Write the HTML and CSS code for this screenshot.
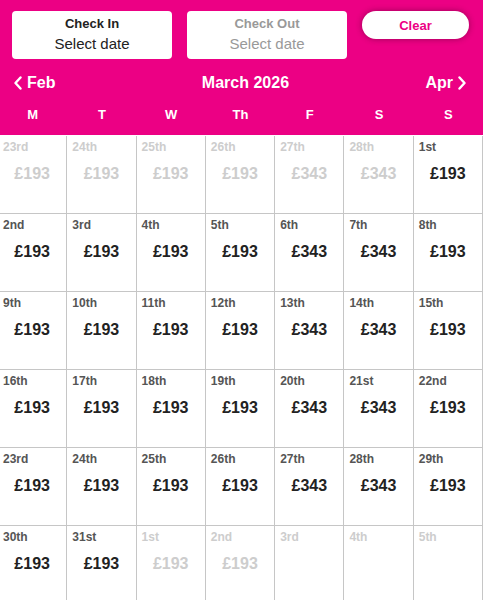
FILE: index.html
```html
<!DOCTYPE html>
<html lang="en">
<head>
<meta charset="utf-8">
<title>Select dates</title>
<link rel="stylesheet" href="styles.css">
</head>
<body>
<div class="picker">
  <header class="header">
    <div class="inputs">
      <div class="field">
        <span class="field-label">Check In</span>
        <span class="field-value">Select date</span>
      </div>
      <div class="field field-disabled">
        <span class="field-label">Check Out</span>
        <span class="field-value">Select date</span>
      </div>
      <button class="clear">Clear</button>
    </div>
    <nav class="nav">
      <span class="nav-link"><svg class="chev" width="10" height="14" viewBox="0 0 10 14"><path d="M7.5 1.5 L2.5 7 L7.5 12.5" fill="none" stroke="#fff" stroke-width="2.4" stroke-linecap="round" stroke-linejoin="round"/></svg>Feb</span>
      <span class="nav-title">March 2026</span>
      <span class="nav-link">Apr<svg class="chev" width="10" height="14" viewBox="0 0 10 14"><path d="M2.5 1.5 L7.5 7 L2.5 12.5" fill="none" stroke="#fff" stroke-width="2.4" stroke-linecap="round" stroke-linejoin="round"/></svg></span>
    </nav>
    <div class="weekdays">
      <span>M</span><span>T</span><span>W</span><span>Th</span><span>F</span><span>S</span><span>S</span>
    </div>
  </header>
  <div class="grid">
    <div class="cell off"><span class="day">23rd</span><span class="price">£193</span></div>
    <div class="cell off"><span class="day">24th</span><span class="price">£193</span></div>
    <div class="cell off"><span class="day">25th</span><span class="price">£193</span></div>
    <div class="cell off"><span class="day">26th</span><span class="price">£193</span></div>
    <div class="cell off"><span class="day">27th</span><span class="price">£343</span></div>
    <div class="cell off"><span class="day">28th</span><span class="price">£343</span></div>
    <div class="cell"><span class="day">1st</span><span class="price">£193</span></div>

    <div class="cell"><span class="day">2nd</span><span class="price">£193</span></div>
    <div class="cell"><span class="day">3rd</span><span class="price">£193</span></div>
    <div class="cell"><span class="day">4th</span><span class="price">£193</span></div>
    <div class="cell"><span class="day">5th</span><span class="price">£193</span></div>
    <div class="cell"><span class="day">6th</span><span class="price">£343</span></div>
    <div class="cell"><span class="day">7th</span><span class="price">£343</span></div>
    <div class="cell"><span class="day">8th</span><span class="price">£193</span></div>

    <div class="cell"><span class="day">9th</span><span class="price">£193</span></div>
    <div class="cell"><span class="day">10th</span><span class="price">£193</span></div>
    <div class="cell"><span class="day">11th</span><span class="price">£193</span></div>
    <div class="cell"><span class="day">12th</span><span class="price">£193</span></div>
    <div class="cell"><span class="day">13th</span><span class="price">£343</span></div>
    <div class="cell"><span class="day">14th</span><span class="price">£343</span></div>
    <div class="cell"><span class="day">15th</span><span class="price">£193</span></div>

    <div class="cell"><span class="day">16th</span><span class="price">£193</span></div>
    <div class="cell"><span class="day">17th</span><span class="price">£193</span></div>
    <div class="cell"><span class="day">18th</span><span class="price">£193</span></div>
    <div class="cell"><span class="day">19th</span><span class="price">£193</span></div>
    <div class="cell"><span class="day">20th</span><span class="price">£343</span></div>
    <div class="cell"><span class="day">21st</span><span class="price">£343</span></div>
    <div class="cell"><span class="day">22nd</span><span class="price">£193</span></div>

    <div class="cell"><span class="day">23rd</span><span class="price">£193</span></div>
    <div class="cell"><span class="day">24th</span><span class="price">£193</span></div>
    <div class="cell"><span class="day">25th</span><span class="price">£193</span></div>
    <div class="cell"><span class="day">26th</span><span class="price">£193</span></div>
    <div class="cell"><span class="day">27th</span><span class="price">£343</span></div>
    <div class="cell"><span class="day">28th</span><span class="price">£343</span></div>
    <div class="cell"><span class="day">29th</span><span class="price">£193</span></div>

    <div class="cell"><span class="day">30th</span><span class="price">£193</span></div>
    <div class="cell"><span class="day">31st</span><span class="price">£193</span></div>
    <div class="cell off"><span class="day">1st</span><span class="price">£193</span></div>
    <div class="cell off"><span class="day">2nd</span><span class="price">£193</span></div>
    <div class="cell off"><span class="day">3rd</span></div>
    <div class="cell off"><span class="day">4th</span></div>
    <div class="cell off"><span class="day">5th</span></div>
  </div>
</div>
</body>
</html>
```
FILE: styles.css
```css
html, body {
  margin: 0;
  padding: 0;
  background: #fff;
  overflow: hidden;
}
body {
  font-family: "Liberation Sans", Arial, Helvetica, sans-serif;
  color: #222;
}
.picker {
  width: 483px;
}
.header {
  background: #ec0084;
  padding: 11px 14px 12px 12px;
  color: #fff;
}
.inputs {
  display: flex;
  gap: 15px;
  align-items: flex-start;
}
.field {
  width: 160px;
  height: 48px;
  box-sizing: border-box;
  background: #fff;
  border-radius: 4px;
  display: flex;
  flex-direction: column;
  align-items: center;
  padding-top: 5px;
  color: #222;
}
.field-label {
  font-size: 13px;
  font-weight: bold;
  line-height: 16px;
}
.field-value {
  font-size: 15px;
  line-height: 18px;
  margin-top: 3px;
}
.field-disabled {
  color: #999;
}
.clear {
  width: 107px;
  height: 28px;
  border: none;
  border-radius: 14px;
  background: #fff;
  color: #ec0084;
  font-family: inherit;
  font-size: 13px;
  font-weight: bold;
  padding: 0;
  box-shadow: 0 0 6px rgba(60, 0, 30, 0.45);
}
.nav {
  margin-top: 14px;
  height: 20px;
  display: flex;
  align-items: center;
  justify-content: space-between;
  font-size: 16px;
  font-weight: bold;
  line-height: 20px;
}
.nav-link {
  display: flex;
  align-items: center;
  gap: 4px;
}
.nav-link:first-child {
  margin-left: 1px;
}
.nav-link:last-child {
  margin-right: 2px;
}
.nav-title {
  margin-left: 10px;
}
.chev {
  display: block;
}
.weekdays {
  margin: 14px -14px 0 -14px;
  display: grid;
  grid-template-columns: repeat(7, 1fr);
  font-size: 13px;
  font-weight: bold;
  line-height: 16px;
  text-align: center;
}
.grid {
  margin-left: -2px;
  padding-top: 1px;
  width: 485px;
  display: grid;
  grid-template-columns: repeat(7, 1fr);
  grid-auto-rows: 78px;
}
.cell {
  border-right: 1px solid #c6c6c6;
  border-bottom: 1px solid #c6c6c6;
  display: flex;
  flex-direction: column;
  padding: 4px 0 0 5px;
  box-sizing: border-box;
}
.day {
  font-size: 12px;
  font-weight: bold;
  line-height: 14px;
  color: #555;
}
.price {
  margin-top: 10px;
  margin-left: -5px;
  text-align: center;
  font-size: 16px;
  font-weight: bold;
  line-height: 20px;
  color: #222;
}
.off .day,
.off .price {
  color: #cdcdcd;
}
```
